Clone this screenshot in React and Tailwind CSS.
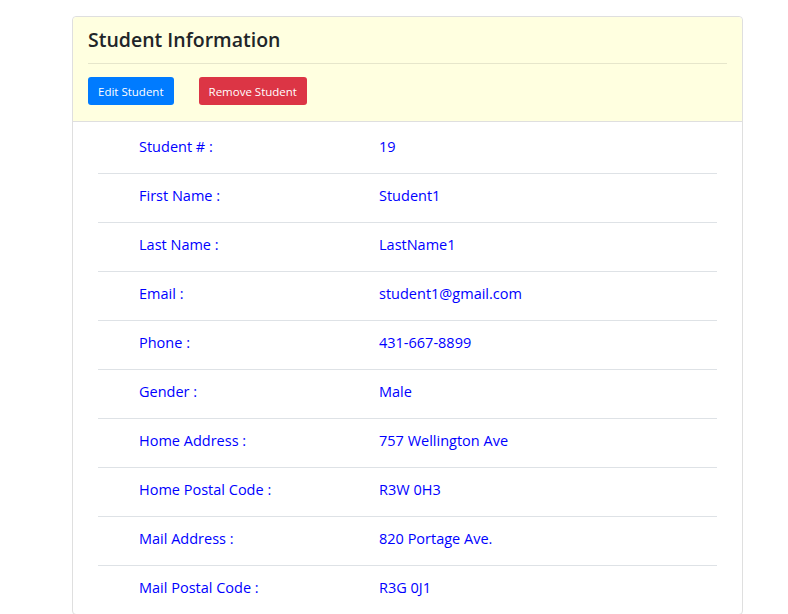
export default function App() {
  const rows = [
    ["Student # :", "19"],
    ["First Name :", "Student1"],
    ["Last Name :", "LastName1"],
    ["Email :", "student1@gmail.com"],
    ["Phone :", "431-667-8899"],
    ["Gender :", "Male"],
    ["Home Address :", "757 Wellington Ave"],
    ["Home Postal Code :", "R3W 0H3"],
    ["Mail Address :", "820 Portage Ave."],
    ["Mail Postal Code :", "R3G 0J1"],
  ];
  return (
    <div className="min-h-[614px] bg-white pt-4" style={{ fontFamily: '"Open Sans", "Noto Sans", sans-serif' }}>
      <div className="ml-[72px] w-[671px] rounded border border-[#dfdfdf]">
        <div className="bg-[#ffffe0] border-b border-[#dfdfdf] px-[15px] pt-[8px] pb-[16px] rounded-t">
          <h2 className="text-[19.5px] leading-[30px] text-[#212529] font-semibold">Student Information</h2>
          <div className="mt-[8px] border-t border-[#e6e6cb]" />
          <div className="mt-[13px] flex gap-[25px]">
            <button className="h-[28px] px-[10px] pt-[2px] rounded-[3px] bg-[#007bff] text-white text-[11.5px]">Edit Student</button>
            <button className="h-[28px] px-[10px] pt-[2px] rounded-[3px] bg-[#dc3545] text-white text-[11.5px]">Remove Student</button>
          </div>
        </div>
        <div className="px-[25px] pt-[2px]">
          {rows.map(([k, v], i) => (
            <div key={k} className={`flex h-[49px] items-center pb-[4px] pl-[41px] text-[14.5px] text-[#0000ff] ${i > 0 ? "border-t border-[#dee2e6]" : ""}`}>
              <div className="w-[240px]">{k}</div>
              <div>{v}</div>
            </div>
          ))}
        </div>
      </div>
    </div>
  );
}
